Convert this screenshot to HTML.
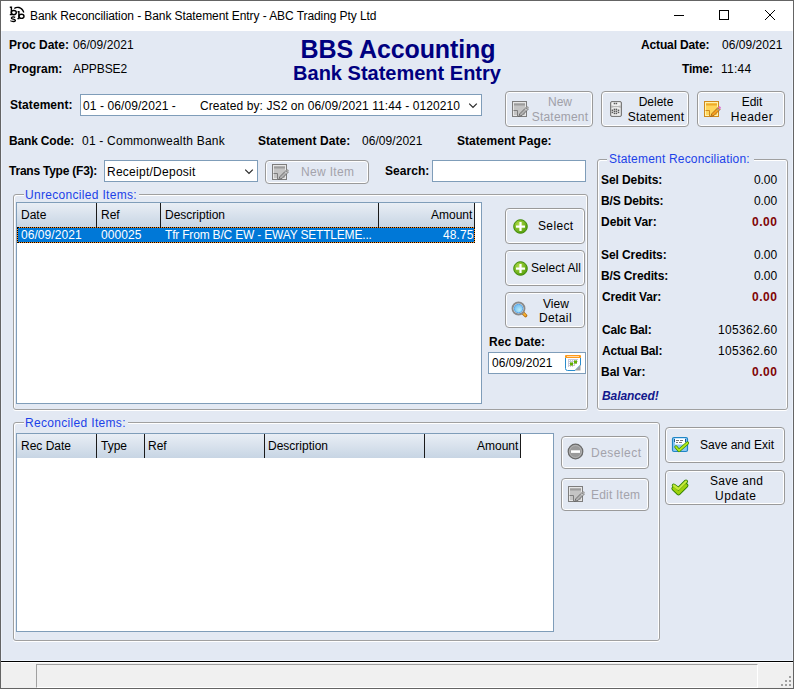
<!DOCTYPE html>
<html><head><meta charset="utf-8">
<style>
*{margin:0;padding:0;box-sizing:border-box}
html,body{width:794px;height:689px;overflow:hidden;background:#fff}
body{position:relative;font-family:"Liberation Sans",sans-serif;font-size:12px;color:#000}
.a{position:absolute}
.t{position:absolute;font-size:12px;line-height:14px;white-space:nowrap}
.b{font-weight:bold}
.r{text-align:right}
.c{text-align:center}
.grp{position:absolute;border:1px solid #a0a0a0;border-radius:3px;box-shadow:inset 1px 1px 0 #fff, inset -1px 0 0 #fff, 0 1px 0 #fff}
.gt{position:absolute;font-size:12px;line-height:14px;color:#1c42e8;background:#e3e9f3;padding:0 4px 0 2px;white-space:nowrap}
.btn{position:absolute;border:1px solid #9a9a9a;border-radius:4px;box-shadow:inset 0 0 0 1px #fff}
.dis{color:#a0a0a8}
.inp{position:absolute;background:#fff;border:1px solid #7f9db9}
.grid{position:absolute;background:#fff;border:1px solid #7f9db9}
.hdr{position:absolute;background:linear-gradient(#e9eef5,#c7d5e4)}
.dv{position:absolute;width:1px;background:#1a1a1a}
</style></head><body>
<!-- window frame -->
<div class="a" style="left:0;top:0;width:794px;height:689px;border:1px solid #646464;background:#e3e9f3"></div>
<div class="a" style="left:1px;top:1px;width:792px;height:30px;background:#fff"></div>
<div class="a" style="left:1px;top:31px;width:1px;height:630px;background:#ebf1fb"></div><div class="a" style="left:792px;top:31px;width:1px;height:630px;background:#ebf1fb"></div><div class="a" style="left:1px;top:660px;width:792px;height:1px;background:#eef4fc"></div>
<!-- title -->
<svg class="a" style="left:8px;top:4px" width="20" height="20" viewBox="0 0 20 20" fill="none" stroke="#000" stroke-width="1.4">
<path d="M1.8 3.3H3.4V10.6M1.8 10.6H4.2"/><ellipse cx="5.8" cy="8.6" rx="2.5" ry="2.1"/>
<path d="M6.3 4.6C8.5 2.6 13.5 2.4 15.8 8.4" stroke-width="1.3"/>
<path d="M9.6 7.7H10.9V14.6M9.4 14.6H11.4"/><ellipse cx="13.5" cy="12.3" rx="2.5" ry="2.1"/>
<path d="M7.2 13.4Q5.5 12.6 4 13.2Q2.6 14 4.4 14.9Q7.6 15.6 7.4 16.6Q6.8 17.8 4.4 17.4Q3 17.2 2.4 16.6" stroke-width="1.3"/>
</svg>
<div class="t" style="left:30px;top:9px;color:#000;letter-spacing:-0.08px">Bank Reconciliation - Bank Statement Entry - ABC Trading Pty Ltd</div>
<div class="a" style="left:674px;top:15px;width:10px;height:1px;background:#000"></div>
<div class="a" style="left:719px;top:10px;width:10px;height:10px;border:1px solid #000"></div>
<svg class="a" style="left:765px;top:10px" width="10" height="10" fill="#000" shape-rendering="crispEdges"><rect x="0" y="0" width="1" height="1"/><rect x="9" y="0" width="1" height="1"/><rect x="1" y="1" width="1" height="1"/><rect x="8" y="1" width="1" height="1"/><rect x="2" y="2" width="1" height="1"/><rect x="7" y="2" width="1" height="1"/><rect x="3" y="3" width="1" height="1"/><rect x="6" y="3" width="1" height="1"/><rect x="4" y="4" width="1" height="1"/><rect x="5" y="4" width="1" height="1"/><rect x="5" y="5" width="1" height="1"/><rect x="4" y="5" width="1" height="1"/><rect x="6" y="6" width="1" height="1"/><rect x="3" y="6" width="1" height="1"/><rect x="7" y="7" width="1" height="1"/><rect x="2" y="7" width="1" height="1"/><rect x="8" y="8" width="1" height="1"/><rect x="1" y="8" width="1" height="1"/><rect x="9" y="9" width="1" height="1"/><rect x="0" y="9" width="1" height="1"/></svg>

<!-- header -->
<div class="t b" style="left:298px;top:36px;font-size:25px;line-height:26px;color:#000080;width:200px;text-align:center;letter-spacing:-0.1px">BBS Accounting</div>
<div class="t b" style="left:290px;top:62px;font-size:20px;line-height:22px;color:#000080;width:214px;text-align:center">Bank Statement Entry</div>

<!-- statement row -->
<div class="inp" style="left:80px;top:94px;width:402px;height:22px;overflow:hidden">
  <div class="t" style="left:2px;top:4px;letter-spacing:0.09px">01 - 06/09/2021 -</div><div class="t" style="left:119px;top:4px;width:260px;overflow:hidden;letter-spacing:0.09px">Created by: JS2 on 06/09/2021 11:44 - 01202100</div>
  <svg class="a" style="left:388px;top:8px" width="10" height="6"><path d="M0.2 0.6L4 4.4L7.8 0.6" stroke="#2a2a2a" stroke-width="1.25" fill="none"/></svg>
</div>

<!-- top buttons -->
<div class="btn" style="left:505px;top:91px;width:88px;height:36px"></div>
<div class="t c dis" style="left:525px;top:95px;width:70px;line-height:15px">New<br><span style="letter-spacing:0.19px">Statement</span></div>
<div class="btn" style="left:601px;top:91px;width:88px;height:36px"></div>
<div class="t c" style="left:621px;top:95px;width:70px;line-height:15px">Delete<br><span style="letter-spacing:0.21px">Statement</span></div>
<div class="btn" style="left:697px;top:91px;width:88px;height:36px"></div>
<div class="t c" style="left:717px;top:95px;width:70px;line-height:15px">Edit<br><span style="letter-spacing:0.5px">Header</span></div>

<!-- bank code row -->

<!-- trans type row -->
<div class="inp" style="left:104px;top:160px;width:154px;height:22px">
  <svg class="a" style="left:140px;top:8px" width="10" height="6"><path d="M0.2 0.6L4 4.4L7.8 0.6" stroke="#2a2a2a" stroke-width="1.25" fill="none"/></svg>
</div>
<div class="btn" style="left:265px;top:160px;width:104px;height:24px"></div>
<div class="inp" style="left:432px;top:160px;width:154px;height:22px"></div>

<!-- Unreconciled group -->
<div class="grp" style="left:13px;top:194px;width:575px;height:216px"></div>
<div class="gt" style="left:24px;top:188px;letter-spacing:0.31px;padding-left:1px;padding-right:2.5px">Unreconciled Items:</div>
<div class="grid" style="left:16px;top:202px;width:466px;height:202px"></div>
<div class="hdr" style="left:17px;top:203px;width:458px;height:24px"></div>
<div class="dv" style="left:96px;top:203px;height:24px"></div>
<div class="dv" style="left:160px;top:203px;height:24px"></div>
<div class="dv" style="left:378px;top:203px;height:24px"></div>
<div class="dv" style="left:474px;top:203px;height:24px"></div>
<div class="a" style="left:17px;top:227px;width:458px;height:16px;background:#0078d7;border:1px solid #ff8c1a"></div><div class="a" style="left:17px;top:227px;width:458px;height:16px;border:1px dotted #000"></div>

<div class="btn" style="left:505px;top:208px;width:80px;height:36px"></div>
<div class="btn" style="left:505px;top:250px;width:80px;height:36px"></div>
<div class="btn" style="left:505px;top:292px;width:80px;height:36px"></div>
<div class="inp" style="left:488px;top:352px;width:98px;height:22px"></div>

<!-- Statement Reconciliation group -->
<div class="grp" style="left:597px;top:159px;width:191px;height:251px"></div>
<div class="gt" style="left:607px;top:152px;letter-spacing:0.19px">Statement Reconciliation:</div>

<!-- Reconciled group -->
<div class="grp" style="left:13px;top:422px;width:647px;height:219px"></div>
<div class="gt" style="left:24px;top:416px;letter-spacing:0.32px;padding-left:1px;padding-right:2.5px">Reconciled Items:</div>
<div class="grid" style="left:16px;top:433px;width:538px;height:199px"></div>
<div class="hdr" style="left:17px;top:434px;width:504px;height:24px"></div>
<div class="dv" style="left:96px;top:434px;height:24px"></div>
<div class="dv" style="left:144px;top:434px;height:24px"></div>
<div class="dv" style="left:264px;top:434px;height:24px"></div>
<div class="dv" style="left:424px;top:434px;height:24px"></div>
<div class="dv" style="left:520px;top:434px;height:24px"></div>

<div class="btn" style="left:561px;top:436px;width:88px;height:33px"></div>
<div class="btn" style="left:561px;top:478px;width:88px;height:33px"></div>
<div class="btn" style="left:665px;top:427px;width:120px;height:36px"></div>
<div class="btn" style="left:665px;top:470px;width:120px;height:35px"></div>


<!-- icons -->
<svg class="a" style="left:512px;top:101px" width="17" height="17" viewBox="0 0 17 17">
<rect x="0.5" y="0.5" width="14" height="15" fill="#c4c4c4" stroke="#7d7d7d"/>
<rect x="1.5" y="1.5" width="12" height="13" fill="none" stroke="#e6e6e6" stroke-width="1"/>
<rect x="2" y="2.5" width="11" height="2" fill="#9c9c9c"/>
<path d="M1.5 9.5H5.5V15" fill="none" stroke="#7d7d7d"/>
<path d="M6.5 15.5L8 12.5L14 6.5L16 8.5L10 14.5Z" fill="#b0b0b0" stroke="#5a5a5a" stroke-width="0.8"/>
<path d="M13 7.5L15 9.5" stroke="#dcdcdc" stroke-width="1"/>
<path d="M14 6.5L15.5 5L17 6.5L16 8.5Z" fill="#a8a8a8"/>
</svg><svg class="a" style="left:610px;top:101px" width="12" height="16" viewBox="0 0 12 16">
<rect x="0.5" y="0.5" width="11" height="15" rx="1.5" fill="#b8b8b8" stroke="#7a7a7a"/>
<path d="M1.5 2Q1.5 1.3 2.5 1.3H9.5Q10.5 1.3 10.5 2V4.5Q8 5.3 6 4.8Q4 5.3 1.5 4.5Z" fill="#f2f2f2"/>
<path d="M1.5 7Q4 5.8 6 6.2Q8 5.8 10.5 7V14Q10.5 14.7 9.5 14.7H2.5Q1.5 14.7 1.5 14Z" fill="#eeeeee"/>
<rect x="3.70" y="7.65" width="1.5" height="1.5" fill="#5a5a5a"/><rect x="3.70" y="9.55" width="1.5" height="1.5" fill="#5a5a5a"/><rect x="3.70" y="11.65" width="1.5" height="1.5" fill="#5a5a5a"/><rect x="5.65" y="7.65" width="1.5" height="1.5" fill="#5a5a5a"/><rect x="5.65" y="9.55" width="1.5" height="1.5" fill="#5a5a5a"/><rect x="5.65" y="11.65" width="1.5" height="1.5" fill="#5a5a5a"/><rect x="1.65" y="8.55" width="1.5" height="1.5" fill="#5a5a5a"/><rect x="1.65" y="10.65" width="1.5" height="1.5" fill="#5a5a5a"/><rect x="7.75" y="8.55" width="1.5" height="1.5" fill="#5a5a5a"/><rect x="7.75" y="10.65" width="1.5" height="1.5" fill="#5a5a5a"/><rect x="3.70" y="1.75" width="1.5" height="1.5" fill="#5a5a5a"/><rect x="5.65" y="1.75" width="1.5" height="1.5" fill="#5a5a5a"/>
</svg><svg class="a" style="left:704px;top:101px" width="17" height="17" viewBox="0 0 17 17">
<rect x="0.5" y="0.5" width="14" height="15" fill="#ffd65c" stroke="#d08a1c"/>
<rect x="1.5" y="1.5" width="12" height="13" fill="none" stroke="#fff2b0" stroke-width="1"/>
<rect x="2" y="2.5" width="11" height="2" fill="#eeaa2a"/>
<path d="M1.5 9.5H5.5V15" fill="none" stroke="#d08a1c"/>
<path d="M6.5 15.5L8 12.5L14 6.5L16 8.5L10 14.5Z" fill="#f5a020" stroke="#9a5a10" stroke-width="0.8"/>
<path d="M13 7.5L15 9.5" stroke="#6aa0e0" stroke-width="1"/>
<path d="M14 6.5L15.5 5L17 6.5L16 8.5Z" fill="#e070d0"/>
</svg><svg class="a" style="left:272px;top:164px" width="17" height="17" viewBox="0 0 17 17">
<rect x="0.5" y="0.5" width="14" height="15" fill="#c4c4c4" stroke="#7d7d7d"/>
<rect x="1.5" y="1.5" width="12" height="13" fill="none" stroke="#e6e6e6" stroke-width="1"/>
<rect x="2" y="2.5" width="11" height="2" fill="#9c9c9c"/>
<path d="M1.5 9.5H5.5V15" fill="none" stroke="#7d7d7d"/>
<path d="M6.5 15.5L8 12.5L14 6.5L16 8.5L10 14.5Z" fill="#b0b0b0" stroke="#5a5a5a" stroke-width="0.8"/>
<path d="M13 7.5L15 9.5" stroke="#dcdcdc" stroke-width="1"/>
<path d="M14 6.5L15.5 5L17 6.5L16 8.5Z" fill="#a8a8a8"/>
</svg><svg class="a" style="left:513px;top:219px" width="16" height="16" viewBox="0 0 16 16">
<defs><radialGradient id="gp513219" cx="0.4" cy="0.35" r="0.7"><stop offset="0" stop-color="#b6e04a"/><stop offset="1" stop-color="#4f9a08"/></radialGradient></defs>
<circle cx="7.5" cy="7.5" r="6.8" fill="url(#gp513219)" stroke="#3e8a06" stroke-width="1"/>
<rect x="3" y="6.5" width="9" height="2.2" fill="#fff"/><rect x="6.4" y="3" width="2.2" height="9" fill="#fff"/>
</svg><svg class="a" style="left:513px;top:261px" width="16" height="16" viewBox="0 0 16 16">
<defs><radialGradient id="gp513261" cx="0.4" cy="0.35" r="0.7"><stop offset="0" stop-color="#b6e04a"/><stop offset="1" stop-color="#4f9a08"/></radialGradient></defs>
<circle cx="7.5" cy="7.5" r="6.8" fill="url(#gp513261)" stroke="#3e8a06" stroke-width="1"/>
<rect x="3" y="6.5" width="9" height="2.2" fill="#fff"/><rect x="6.4" y="3" width="2.2" height="9" fill="#fff"/>
</svg><svg class="a" style="left:511px;top:301px" width="17" height="17" viewBox="0 0 17 17">
<defs><radialGradient id="lens" cx="0.6" cy="0.65" r="0.7"><stop offset="0" stop-color="#b8ecfa"/><stop offset="1" stop-color="#6cb8ee"/></radialGradient></defs>
<path d="M11.2 11.2L14.6 14.6" stroke="#b87010" stroke-width="3.4" stroke-linecap="round"/>
<path d="M11.4 11.4L14.4 14.4" stroke="#f6b030" stroke-width="1.8" stroke-linecap="round"/>
<circle cx="7.5" cy="7.5" r="6" fill="#fff" stroke="#8a8a8a" stroke-width="1.9"/>
<circle cx="7.5" cy="7.5" r="4.3" fill="url(#lens)" stroke="#4a9ee6" stroke-width="0.9"/>
</svg><svg class="a" style="left:565px;top:355px" width="16" height="16" viewBox="0 0 16 16">
<path d="M0.5 2.5V13.5Q0.5 15.5 2.5 15.5H10L15.5 10V2.5" fill="#fff" stroke="#2a8ccc" stroke-width="1"/>
<rect x="0" y="0" width="16" height="3" rx="1" fill="#ff9a1a"/>
<rect x="2" y="1" width="12" height="1" fill="#ffd8a8"/>
<g fill="#c8c8d8"><rect x="3" y="4" width="10" height="1"/><rect x="3" y="6" width="10" height="1"/><rect x="3" y="8" width="9" height="1"/><rect x="3" y="10" width="7" height="1"/><rect x="3" y="4" width="1" height="8"/><rect x="5" y="4" width="1" height="8"/><rect x="7" y="4" width="1" height="8"/><rect x="9" y="4" width="1" height="7"/><rect x="11" y="4" width="1" height="5"/></g>
<rect x="5" y="7.5" width="3" height="3" fill="#62b000"/><rect x="9" y="5.5" width="3" height="3" fill="#62b000"/>
<path d="M10 15.5L15.5 10V15.5Z" fill="#a0a0a0"/>
</svg><svg class="a" style="left:567px;top:443px" width="17" height="17" viewBox="0 0 17 17">
<circle cx="8.5" cy="8.5" r="7.3" fill="#9a9a9a" stroke="#6a6a6a" stroke-width="1.2"/>
<circle cx="8.5" cy="8.5" r="6" fill="none" stroke="#b8b8b8" stroke-width="0.8"/>
<rect x="4" y="7.3" width="9" height="2.6" fill="#fff"/>
</svg><svg class="a" style="left:568px;top:486px" width="17" height="17" viewBox="0 0 17 17">
<rect x="0.5" y="0.5" width="14" height="15" fill="#c4c4c4" stroke="#7d7d7d"/>
<rect x="1.5" y="1.5" width="12" height="13" fill="none" stroke="#e6e6e6" stroke-width="1"/>
<rect x="2" y="2.5" width="11" height="2" fill="#9c9c9c"/>
<path d="M1.5 9.5H5.5V15" fill="none" stroke="#7d7d7d"/>
<path d="M6.5 15.5L8 12.5L14 6.5L16 8.5L10 14.5Z" fill="#b0b0b0" stroke="#5a5a5a" stroke-width="0.8"/>
<path d="M13 7.5L15 9.5" stroke="#dcdcdc" stroke-width="1"/>
<path d="M14 6.5L15.5 5L17 6.5L16 8.5Z" fill="#a8a8a8"/>
</svg><svg class="a" style="left:671px;top:436px" width="18" height="17" viewBox="0 0 18 17">
<rect x="1.5" y="1.5" width="15" height="14" rx="1.5" fill="#8cc8f4" stroke="#1f86c6" stroke-width="1.2"/>
<rect x="4" y="2.5" width="10" height="6" fill="#fff"/>
<rect x="3" y="3" width="1" height="3" fill="#1a5a90"/><rect x="14" y="3" width="1" height="3" fill="#1a5a90"/>
<g fill="#777"><rect x="5" y="4" width="3" height="1"/><rect x="9" y="4" width="3" height="1"/><rect x="5" y="6" width="2" height="1"/><rect x="8" y="6" width="3" height="1"/></g>
<path d="M5 11L8 14.5L16.5 7" fill="none" stroke="#3a8a00" stroke-width="3.2" stroke-linejoin="round" stroke-linecap="round"/>
<path d="M5 11L8 14.5L16.5 7" fill="none" stroke="#b6ea1a" stroke-width="1.8" stroke-linejoin="round" stroke-linecap="round"/>
</svg><svg class="a" style="left:671px;top:478px" width="18" height="18" viewBox="0 0 18 18">
<path d="M2.8 10.5L7.5 15L15 7.5" fill="none" stroke="#2f8000" stroke-width="4.6" stroke-linejoin="round" stroke-linecap="round"/>
<path d="M2.8 7.5L7.5 11L15 3.5" fill="none" stroke="#2f8000" stroke-width="4" stroke-linejoin="round" stroke-linecap="round"/>
<path d="M2.8 10.5L7.5 15L15 7.5" fill="none" stroke="#9ed20e" stroke-width="3" stroke-linejoin="round" stroke-linecap="round"/>
<path d="M2.8 7.5L7.5 11L15 3.5" fill="none" stroke="#c6ea3a" stroke-width="2.4" stroke-linejoin="round" stroke-linecap="round"/>
</svg>
<!-- status bar -->
<div class="a" style="left:1px;top:661px;width:792px;height:1px;background:#000"></div>
<div class="a" style="left:1px;top:662px;width:792px;height:26px;background:#f0f0f0;border-top:1px solid #fff"></div>
<div class="a" style="left:36px;top:664px;width:722px;height:24px;border-left:1px solid #a0a0a0;border-top:1px solid #a0a0a0;border-right:1px solid #fff;border-bottom:1px solid #fff"></div>
<div class="a" style="left:789px;top:676px;width:2px;height:2px;background:#a0a0a0"></div><div class="a" style="left:785px;top:680px;width:2px;height:2px;background:#a0a0a0"></div><div class="a" style="left:789px;top:680px;width:2px;height:2px;background:#a0a0a0"></div><div class="a" style="left:781px;top:684px;width:2px;height:2px;background:#a0a0a0"></div><div class="a" style="left:785px;top:684px;width:2px;height:2px;background:#a0a0a0"></div><div class="a" style="left:789px;top:684px;width:2px;height:2px;background:#a0a0a0"></div>
<div class="t" style="left:9px;top:38px;color:#000;font-weight:bold">Proc Date:</div>
<div class="t" style="left:73px;top:38px;color:#000;letter-spacing:0.06px">06/09/2021</div>
<div class="t" style="left:9px;top:62px;color:#000;font-weight:bold">Program:</div>
<div class="t" style="left:73px;top:62px;color:#000;letter-spacing:-0.08px">APPBSE2</div>
<div class="t" style="left:641px;top:38px;color:#000;font-weight:bold;letter-spacing:-0.14px">Actual Date:</div>
<div class="t" style="left:722px;top:38px;color:#000;letter-spacing:0.04px">06/09/2021</div>
<div class="t" style="left:682px;top:62px;color:#000;font-weight:bold;letter-spacing:-0.18px">Time:</div>
<div class="t" style="left:721px;top:62px;color:#000;letter-spacing:0.25px">11:44</div>
<div class="t" style="left:10px;top:98px;color:#000;font-weight:bold;letter-spacing:0.06px">Statement:</div>
<div class="t" style="left:9px;top:134px;color:#000;font-weight:bold;letter-spacing:-0.17px">Bank Code:</div>
<div class="t" style="left:82px;top:134px;color:#000;letter-spacing:0.22px">01 - Commonwealth Bank</div>
<div class="t" style="left:258px;top:134px;color:#000;font-weight:bold;letter-spacing:0.06px">Statement Date:</div>
<div class="t" style="left:362px;top:134px;color:#000;letter-spacing:0.05px">06/09/2021</div>
<div class="t" style="left:457px;top:134px;color:#000;font-weight:bold;letter-spacing:0.04px">Statement Page:</div>
<div class="t" style="left:9px;top:164px;color:#000;font-weight:bold;letter-spacing:-0.23px">Trans Type (F3):</div>
<div class="t" style="left:107px;top:165px;color:#000;letter-spacing:0.26px">Receipt/Deposit</div>
<div class="t" style="left:301px;top:165px;color:#a3a3ab;letter-spacing:0.33px">New Item</div>
<div class="t" style="left:385px;top:164px;color:#000;font-weight:bold;letter-spacing:0.05px">Search:</div>
<div class="t" style="left:21px;top:208px;color:#000">Date</div>
<div class="t" style="left:101px;top:208px;color:#000">Ref</div>
<div class="t" style="left:165px;top:208px;color:#000">Description</div>
<div class="t" style="left:431px;top:208px;color:#000">Amount</div>
<div class="t" style="left:21px;top:228px;color:#fff;letter-spacing:0.06px">06/09/2021</div>
<div class="t" style="left:101px;top:228px;color:#fff;letter-spacing:0.06px">000025</div>
<div class="t" style="left:165px;top:228px;color:#fff;letter-spacing:-0.19px">Tfr From B/C EW - EWAY SETTLEME...</div>
<div class="t" style="left:443px;top:228px;color:#fff;letter-spacing:0.1px">48.75</div>
<div class="t" style="left:538px;top:219px;color:#000;letter-spacing:0.36px">Select</div>
<div class="t" style="left:531px;top:261px;color:#000;letter-spacing:0.07px">Select All</div>
<div class="t" style="left:543px;top:297px;color:#000">View</div>
<div class="t" style="left:539px;top:311px;color:#000;letter-spacing:0.38px">Detail</div>
<div class="t" style="left:489px;top:335px;color:#000;font-weight:bold;letter-spacing:0.08px">Rec Date:</div>
<div class="t" style="left:492px;top:356px;color:#000;letter-spacing:0.05px">06/09/2021</div>
<div class="t" style="left:601px;top:173px;color:#000;font-weight:bold;letter-spacing:-0.08px">Sel Debits:</div>
<div class="t" style="left:754px;top:173px;color:#000;letter-spacing:-0.1px">0.00</div>
<div class="t" style="left:601px;top:194px;color:#000;font-weight:bold;letter-spacing:-0.16px">B/S Debits:</div>
<div class="t" style="left:754px;top:194px;color:#000;letter-spacing:-0.1px">0.00</div>
<div class="t" style="left:601px;top:215px;color:#000;font-weight:bold;letter-spacing:-0.04px">Debit Var:</div>
<div class="t" style="left:752px;top:215px;color:#800404;font-weight:bold;letter-spacing:0.5px">0.00</div>
<div class="t" style="left:601px;top:248px;color:#000;font-weight:bold;letter-spacing:-0.09px">Sel Credits:</div>
<div class="t" style="left:754px;top:248px;color:#000;letter-spacing:-0.1px">0.00</div>
<div class="t" style="left:601px;top:269px;color:#000;font-weight:bold;letter-spacing:-0.13px">B/S Credits:</div>
<div class="t" style="left:754px;top:269px;color:#000;letter-spacing:-0.1px">0.00</div>
<div class="t" style="left:602px;top:290px;color:#000;font-weight:bold;letter-spacing:-0.15px">Credit Var:</div>
<div class="t" style="left:752px;top:290px;color:#800404;font-weight:bold;letter-spacing:0.5px">0.00</div>
<div class="t" style="left:602px;top:323px;color:#000;font-weight:bold;letter-spacing:-0.21px">Calc Bal:</div>
<div class="t" style="left:718px;top:323px;color:#000;letter-spacing:0.31px">105362.60</div>
<div class="t" style="left:602px;top:344px;color:#000;font-weight:bold;letter-spacing:-0.23px">Actual Bal:</div>
<div class="t" style="left:718px;top:344px;color:#000;letter-spacing:0.31px">105362.60</div>
<div class="t" style="left:601px;top:365px;color:#000;font-weight:bold;letter-spacing:-0.04px">Bal Var:</div>
<div class="t" style="left:752px;top:365px;color:#800404;font-weight:bold;letter-spacing:0.5px">0.00</div>
<div class="t" style="left:602px;top:389px;color:#12188c;font-weight:bold;font-style:italic;letter-spacing:-0.08px">Balanced!</div>
<div class="t" style="left:21px;top:439px;color:#000">Rec Date</div>
<div class="t" style="left:101px;top:439px;color:#000">Type</div>
<div class="t" style="left:148px;top:439px;color:#000">Ref</div>
<div class="t" style="left:268px;top:439px;color:#000">Description</div>
<div class="t" style="left:477px;top:439px;color:#000">Amount</div>
<div class="t" style="left:591px;top:446px;color:#a3a3ab;letter-spacing:0.47px">Deselect</div>
<div class="t" style="left:591px;top:488px;color:#a3a3ab;letter-spacing:0.21px">Edit Item</div>
<div class="t" style="left:700px;top:438px;color:#000">Save and Exit</div>
<div class="t" style="left:710px;top:474px;color:#000;letter-spacing:0.31px">Save and</div>
<div class="t" style="left:715px;top:489px;color:#000;letter-spacing:0.46px">Update</div>
</body></html>
